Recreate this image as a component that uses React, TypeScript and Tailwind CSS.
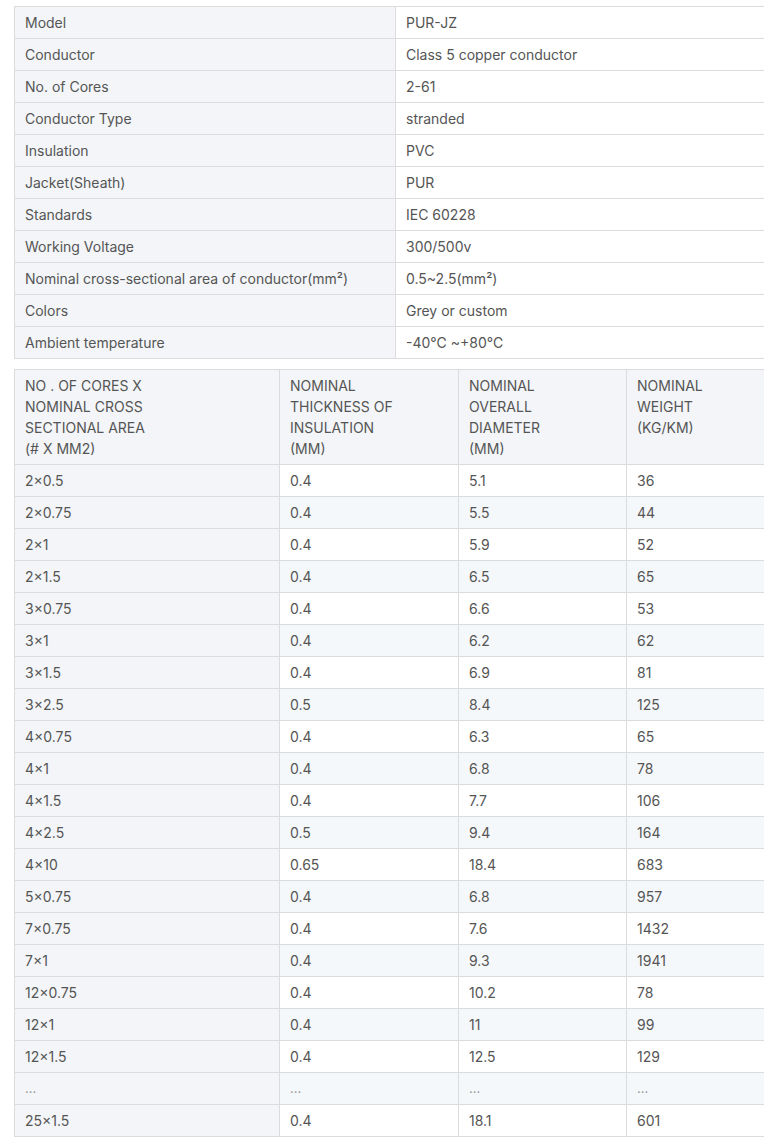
const specs: [string, React.ReactNode][] = [
  ["Model", "PUR-JZ"],
  ["Conductor", "Class 5 copper conductor"],
  ["No. of Cores", "2-61"],
  ["Conductor Type", "stranded"],
  ["Insulation", "PVC"],
  ["Jacket(Sheath)", "PUR"],
  ["Standards", "IEC 60228"],
  ["Working Voltage", "300/500v"],
  ["Nominal cross-sectional area of conductor(mm²)", "0.5~2.5(mm²)"],
  ["Colors", "Grey or custom"],
  ["Ambient temperature", "-40℃ ~+80℃"],
];

const rows: string[][] = [
  ["2×0.5", "0.4", "5.1", "36"],
  ["2×0.75", "0.4", "5.5", "44"],
  ["2×1", "0.4", "5.9", "52"],
  ["2×1.5", "0.4", "6.5", "65"],
  ["3×0.75", "0.4", "6.6", "53"],
  ["3×1", "0.4", "6.2", "62"],
  ["3×1.5", "0.4", "6.9", "81"],
  ["3×2.5", "0.5", "8.4", "125"],
  ["4×0.75", "0.4", "6.3", "65"],
  ["4×1", "0.4", "6.8", "78"],
  ["4×1.5", "0.4", "7.7", "106"],
  ["4×2.5", "0.5", "9.4", "164"],
  ["4×10", "0.65", "18.4", "683"],
  ["5×0.75", "0.4", "6.8", "957"],
  ["7×0.75", "0.4", "7.6", "1432"],
  ["7×1", "0.4", "9.3", "1941"],
  ["12×0.75", "0.4", "10.2", "78"],
  ["12×1", "0.4", "11", "99"],
  ["12×1.5", "0.4", "12.5", "129"],
  ["...", "...", "...", "..."],
  ["25×1.5", "0.4", "18.1", "601"],
];

const cell =
  "border border-[#dcdcdc] px-[10px] py-[5px] text-left align-top font-normal";

export default function App() {
  return (
    <div
      className="bg-white min-h-[1143px] pt-[6px] pl-[14px] text-[14px] leading-[21px] text-[#555]"
      style={{ fontFamily: "Inter, 'Liberation Sans', sans-serif" }}
    >
      <table className="w-[750px] table-fixed border-collapse">
        <colgroup>
          <col className="w-[381px]" />
          <col />
        </colgroup>
        <tbody>
          {specs.map(([label, value]) => (
            <tr key={label}>
              <td className={`${cell} bg-[#f3f5f8]`}>{label}</td>
              <td className={`${cell} bg-white border-r-transparent`}>{value}</td>
            </tr>
          ))}
        </tbody>
      </table>

      <table className="mt-[10px] w-[750px] table-fixed border-collapse">
        <colgroup>
          <col className="w-[265px]" />
          <col className="w-[179px]" />
          <col className="w-[168px]" />
          <col />
        </colgroup>
        <thead>
          <tr className="bg-[#f3f5f8]">
            <th className={cell}>
              NO . OF CORES X
              <br />
              NOMINAL CROSS
              <br />
              SECTIONAL AREA
              <br />
              (# X MM2)
            </th>
            <th className={cell}>
              NOMINAL
              <br />
              THICKNESS OF
              <br />
              INSULATION
              <br />
              (MM)
            </th>
            <th className={cell}>
              NOMINAL
              <br />
              OVERALL
              <br />
              DIAMETER
              <br />
              (MM)
            </th>
            <th className={`${cell} border-r-transparent`}>
              NOMINAL
              <br />
              WEIGHT
              <br />
              (KG/KM)
            </th>
          </tr>
        </thead>
        <tbody>
          {rows.map((r, i) => (
            <tr key={i} className={i % 2 === 1 ? "bg-[#f5f8fb]" : "bg-white"}>
              {r.map((v, j) => (
                <td
                  key={j}
                  className={`${cell} ${j === 0 ? "bg-[#f3f5f8]" : ""} ${
                    j === 3 ? "border-r-transparent" : ""
                  } ${v === "..." ? "text-[#999] text-[13px]" : ""}`}
                >
                  {v}
                </td>
              ))}
            </tr>
          ))}
        </tbody>
      </table>
    </div>
  );
}
